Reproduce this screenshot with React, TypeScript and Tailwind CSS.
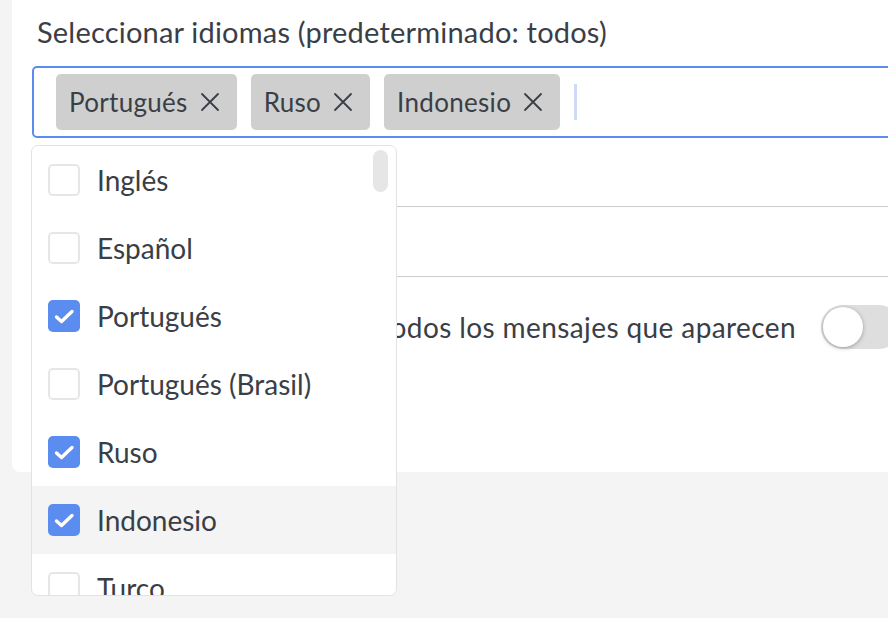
import React from "react";

const font = { fontFamily: "Lato, 'Noto Sans', sans-serif" };

function XIcon() {
  return (
    <svg width="20" height="20" viewBox="0 0 20 20" fill="none" stroke="currentColor" strokeWidth="1.8" strokeLinecap="round">
      <path d="M2 2 L18 18 M18 2 L2 18" />
    </svg>
  );
}

function Chip({ label }: { label: string }) {
  return (
    <div className="flex h-[56px] items-center gap-[12px] rounded-[5px] bg-[#cfcfcf] pl-[13px] pr-[17px] text-[26px] tracking-[0.3px] text-[#3a3e46]">
      <span>{label}</span>
      <XIcon />
    </div>
  );
}

function Checkbox({ checked }: { checked: boolean }) {
  if (checked) {
    return (
      <div className="flex h-[32px] w-[32px] items-center justify-center rounded-[5px] bg-[#5b8cef]">
        <svg width="32" height="32" viewBox="0 0 32 32" fill="none" stroke="white" strokeWidth="3.4" strokeLinecap="round" strokeLinejoin="round">
          <path d="M8.5 17 L13.5 21.5 L24 11.5" />
        </svg>
      </div>
    );
  }
  return <div className="h-[32px] w-[32px] rounded-[5px] border-2 border-[#e6e6e6] bg-white" />;
}

const options: { label: string; checked: boolean; hover?: boolean }[] = [
  { label: "Inglés", checked: false },
  { label: "Español", checked: false },
  { label: "Portugués", checked: true },
  { label: "Portugués (Brasil)", checked: false },
  { label: "Ruso", checked: true },
  { label: "Indonesio", checked: true, hover: true },
  { label: "Turco", checked: false },
];

export default function App() {
  return (
    <div className="relative h-[618px] w-[888px] overflow-hidden bg-[#f4f4f4] text-[28px] text-[#3a3e46]" style={font}>
      <div className="ml-[12px] w-[909px] rounded-b-[8px] bg-white px-[20px] pt-[14px]">
        <div className="pl-[5px] text-[29px] leading-[36px] tracking-[0.2px]">Seleccionar idiomas (predeterminado: todos)</div>
        <div className="relative mt-[16px]">
          <div className="flex items-center gap-[14px] rounded-[5px] border-2 border-[#5b8cef] py-[6px] pl-[22px]">
            <Chip label="Portugués" />
            <Chip label="Ruso" />
            <Chip label="Indonesio" />
            <div className="h-[36px] w-[3px] bg-[#cfdaf6]" />
          </div>
        </div>
        <div className="h-[69px] border-b border-[#cccccc]" />
        <div className="h-[70px] border-b border-[#cccccc]" />
        <div className="flex h-[100px] items-center gap-[25px]">
          <div className="flex-1 text-right leading-[36px] tracking-[0.4px]">Traducir automáticamente todos los mensajes que aparecen</div>
          <div className="relative h-[44px] w-[80px] rounded-full bg-[#dedede]">
            <div className="absolute left-[2px] top-[2px] h-[40px] w-[40px] rounded-full bg-white shadow-[0_1px_4px_rgba(0,0,0,0.3)]" />
          </div>
        </div>
        <div className="h-[95px]" />
      </div>

      <div className="absolute left-[31px] top-[145px] h-[451px] w-[366px] overflow-hidden rounded-[7px] border-[1.5px] border-[#e3e3e3] bg-white">
        {options.map((o) => (
          <div
            key={o.label}
            className={`flex h-[68px] items-center gap-[17px] pl-[16px] ${o.hover ? "bg-[#f4f4f4]" : ""}`}
          >
            <Checkbox checked={o.checked} />
            <span>{o.label}</span>
          </div>
        ))}
        <div className="absolute right-[8px] top-[4px] h-[42px] w-[15px] rounded-full bg-[#e6e6e6]" />
      </div>
    </div>
  );
}
